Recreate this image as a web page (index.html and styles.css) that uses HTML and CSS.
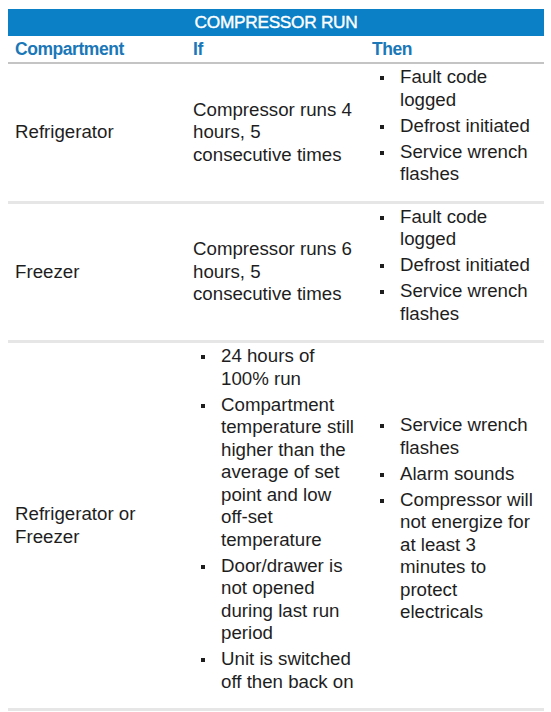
FILE: index.html
```html
<!DOCTYPE html>
<html>
<head>
<meta charset="utf-8">
<link rel="stylesheet" href="styles.css">
</head>
<body>
<table class="run-table">
  <colgroup>
    <col class="c1"><col class="c2"><col class="c3">
  </colgroup>
  <thead>
    <tr><th class="title" colspan="3">COMPRESSOR RUN</th></tr>
    <tr class="heads"><th>Compartment</th><th>If</th><th>Then</th></tr>
  </thead>
  <tbody>
    <tr>
      <td>Refrigerator</td>
      <td>Compressor runs 4 hours, 5 consecutive times</td>
      <td><ul class="bullets"><li>Fault code logged</li><li>Defrost initiated</li><li>Service wrench flashes</li></ul></td>
    </tr>
    <tr>
      <td>Freezer</td>
      <td>Compressor runs 6 hours, 5 consecutive times</td>
      <td><ul class="bullets"><li>Fault code logged</li><li>Defrost initiated</li><li>Service wrench flashes</li></ul></td>
    </tr>
    <tr>
      <td>Refrigerator or Freezer</td>
      <td><ul class="bullets"><li>24 hours of 100% run</li><li>Compartment temperature still higher than the average of set point and low off-set temperature</li><li>Door/drawer is not opened during last run period</li><li>Unit is switched off then back on</li></ul></td>
      <td><ul class="bullets"><li>Service wrench flashes</li><li>Alarm sounds</li><li>Compressor will not energize for at least 3 minutes to protect electricals</li></ul></td>
    </tr>
  </tbody>
</table>
</body>
</html>
```
FILE: styles.css
```css
html, body {
  margin: 0;
  background: #ffffff;
}
body {
  padding: 9px 7px 0 8px;
  font-family: "Liberation Sans", Arial, sans-serif;
  color: #1e1e1e;
}
.run-table {
  width: 536px;
  border-collapse: collapse;
  table-layout: fixed;
}
.c1 { width: 178px; }
.c2 { width: 179px; }
.c3 { width: 179px; }
.title {
  background: #0b80c6;
  color: #ffffff;
  font-size: 17.3px;
  font-weight: normal;
  letter-spacing: -0.3px;
  -webkit-text-stroke: 0.4px #ffffff;
  height: 27px;
  padding: 0;
  text-align: center;
  vertical-align: middle;
}
.heads th {
  height: 26px;
  padding: 0 4px 0 7px;
  text-align: left;
  font-size: 17.5px;
  font-weight: bold;
  letter-spacing: -0.45px;
  color: #1a77b8;
  border-bottom: 2px solid #c4c4c4;
  vertical-align: middle;
}
tbody td {
  padding: 2px 4px 2px 7px;
  font-size: 18.7px;
  line-height: 22.5px;
  vertical-align: middle;
  border-bottom: 3px solid #e6e6e6;
}
.bullets {
  list-style: none;
  margin: 0 0 13px 0;
  padding: 0;
}
.bullets li {
  display: grid;
  grid-template-columns: 28px 1fr;
  margin-top: 3.5px;
}
.bullets li:first-child {
  margin-top: 0;
}
.bullets li::before {
  content: "";
  width: 4px;
  height: 4px;
  margin: 10px 0 0 8px;
  background: #1e1e1e;
}
```
